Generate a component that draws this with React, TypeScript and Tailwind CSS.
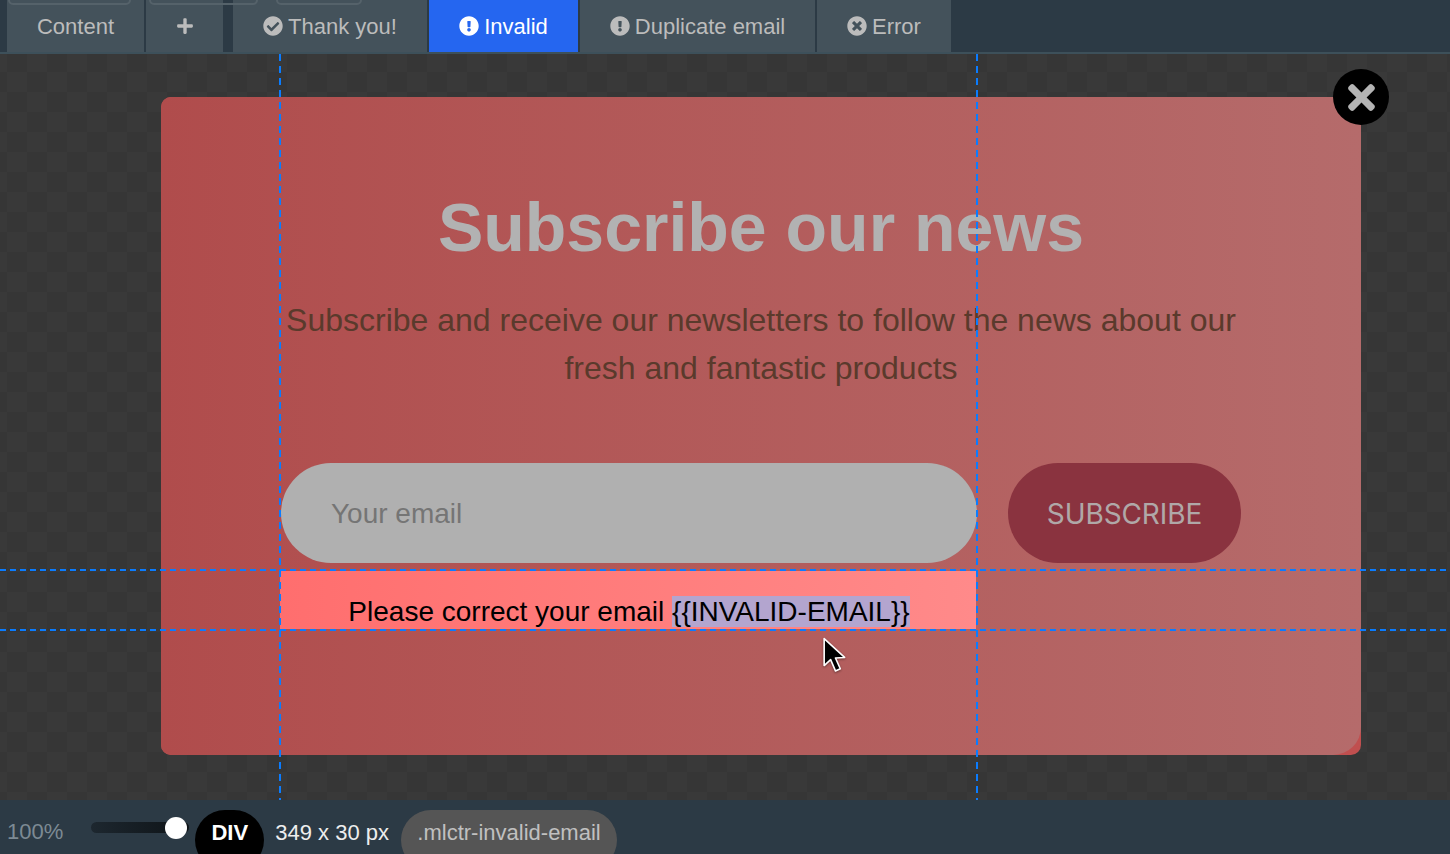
import React from "react";
import { FaCheckCircle, FaExclamationCircle, FaTimesCircle, FaPlus, FaTimes } from "react-icons/fa";

const tabBase = "h-[52px] flex items-center justify-center gap-[5px] text-[22px]";

function Tab({ w, ml, active, children }: { w: string; ml: string; active?: boolean; children: React.ReactNode }) {
  return (
    <div className={`${tabBase} ${w} ${ml} ${active ? "bg-[#2566f0] text-white" : "bg-[#44525b] text-[#bcbcbc]"}`}>
      {children}
    </div>
  );
}

export default function App() {
  return (
    <div className="relative w-[1450px] h-[854px] overflow-hidden flex flex-col bg-[#2c3a45] font-['Liberation_Sans',Arial,sans-serif]">
      {/* top bar */}
      <header className="relative h-[54px] shrink-0 border-b-2 border-[#3d505a] flex items-start">
        <Tab w="w-[137px]" ml="ml-[7px]">Content</Tab>
        <Tab w="w-[77px]" ml="ml-[2px]"><FaPlus className="text-[18px]" /></Tab>
        <Tab w="w-[194px]" ml="ml-[10px]"><FaCheckCircle className="text-[20px]" /><span>Thank you!</span></Tab>
        <Tab w="w-[149px]" ml="ml-[2px]" active><FaExclamationCircle className="text-[20px]" /><span>Invalid</span></Tab>
        <Tab w="w-[235px]" ml="ml-[2px]"><FaExclamationCircle className="text-[20px]" /><span>Duplicate email</span></Tab>
        <Tab w="w-[134px]" ml="ml-[2px]"><FaTimesCircle className="text-[20px]" /><span>Error</span></Tab>
        <div className="absolute left-[8px] top-[-6px] w-[123px] h-[11px] rounded-[5px] border-2 border-[#55626a]" />
        <div className="absolute left-[149px] top-[-6px] w-[109px] h-[11px] rounded-[5px] border-2 border-[#55626a]" />
        <div className="absolute left-[276px] top-[-6px] w-[86px] h-[11px] rounded-[5px] border-2 border-[#55626a]" />
      </header>

      {/* canvas */}
      <main className="relative h-[746px] shrink-0 pt-[43px] pl-[161px] bg-[#373737] bg-[repeating-conic-gradient(#393939_0_25%,#363636_0_50%)] bg-[length:40px_40px] bg-[position:7px_-2px]">
        <section className="relative w-[1200px] h-[658px] rounded-[10px] overflow-hidden bg-[#c04f4f]">
          <div className="h-full rounded-br-[28px] bg-gradient-to-r from-[#b04c4c] to-[#b56b6b] flex flex-col items-center">
            <h1 className="mt-[92px] h-[76px] leading-[76px] text-[68px] font-bold text-[#b2b2b2]">Subscribe our news</h1>
            <p className="mt-[31px] w-[1000px] text-center text-[32px] leading-[48px] text-[#5a3a2c]">
              Subscribe and receive our newsletters to follow the news about our
              <br />
              fresh and fantastic products
            </p>
            <div className="mt-[71px] self-start ml-[120px] flex gap-[31px]">
              <div className="w-[696px] h-[100px] rounded-[50px] bg-[#b0b0b0] flex items-center pl-[50px] pt-[2px] text-[28px] text-[#757575]">
                Your email
              </div>
              <div className="w-[233px] h-[100px] rounded-[50px] bg-[#8a333f] flex items-center justify-center pt-[2px] text-[28px] tracking-[-0.1px] text-[#b0a8a8] font-['Inter',sans-serif]">
                SUBSCRIBE
              </div>
            </div>
            <div className="mt-[8px] self-start ml-[119px] w-[696px] h-[58px] bg-gradient-to-r from-[#ff6e6e] to-[#ff8a8a] text-center text-[28px] leading-[30px] pt-[26px] pl-[2px] text-black whitespace-nowrap">
              Please correct your email <span className="bg-[#b3a5cf]">{"{{INVALID-EMAIL}}"}</span>
            </div>
          </div>
        </section>

        {/* guides */}
        <div className="absolute left-[279px] top-0 bottom-0 w-[2px] bg-[repeating-linear-gradient(to_bottom,#0a7cff_0_7px,transparent_7px_12px)]" />
        <div className="absolute left-[976px] top-0 bottom-0 w-[2px] bg-[repeating-linear-gradient(to_bottom,#0a7cff_0_7px,transparent_7px_12px)]" />
        <div className="absolute left-0 right-0 top-[515px] h-[2px] bg-[repeating-linear-gradient(to_right,#0a7cff_0_6px,transparent_6px_10px)]" />
        <div className="absolute left-0 right-0 top-[575px] h-[2px] bg-[repeating-linear-gradient(to_right,#0a7cff_0_6px,transparent_6px_10px)]" />

        {/* close */}
        <div className="absolute left-[1333px] top-[15px] w-[56px] h-[56px] rounded-full bg-black flex items-center justify-center text-[#b4b4b4]">
          <FaTimes className="text-[39px]" />
        </div>

        {/* cursor */}
        <svg className="absolute left-[822px] top-[583px] drop-shadow-[0_1px_1px_rgba(0,0,0,0.4)]" width="28" height="42" viewBox="0 0 26 38">
          <path d="M2 1 L2 26 L8 20.5 L12.5 31 L17 29 L12.5 19 L21 18.5 Z" fill="#000" stroke="#fff" strokeWidth="1.5" strokeLinejoin="round" />
        </svg>
      </main>

      {/* bottom bar */}
      <footer className="relative flex-1 flex items-start">
        <span className="ml-[7px] mt-[19px] text-[22px] leading-[25px] text-[#7d8a94]">100%</span>
        <div className="relative ml-[28px] mt-[22px] w-[98px] h-[11px] rounded-[6px] bg-gradient-to-r from-[#1d272f] to-[#0e1317]">
          <div className="absolute left-[74px] top-[-5px] w-[22px] h-[22px] rounded-full bg-white" />
        </div>
        <div className="ml-[6px] relative mt-[10px] w-[69px] h-[60px] rounded-[30px] bg-black text-white font-bold text-[22px] flex justify-center pt-[6px]">DIV</div>
        <span className="ml-[11px] mt-[10px] text-[22px] leading-[25px] text-[#eeeeee] pt-[10px]">349 x 30 px</span>
        <div className="ml-[12px] mt-[10px] w-[216px] h-[60px] rounded-[30px] bg-[#555555] text-[#c0c0c0] text-[22px] flex justify-center pt-[6px]">.mlctr-invalid-email</div>
      </footer>
    </div>
  );
}
